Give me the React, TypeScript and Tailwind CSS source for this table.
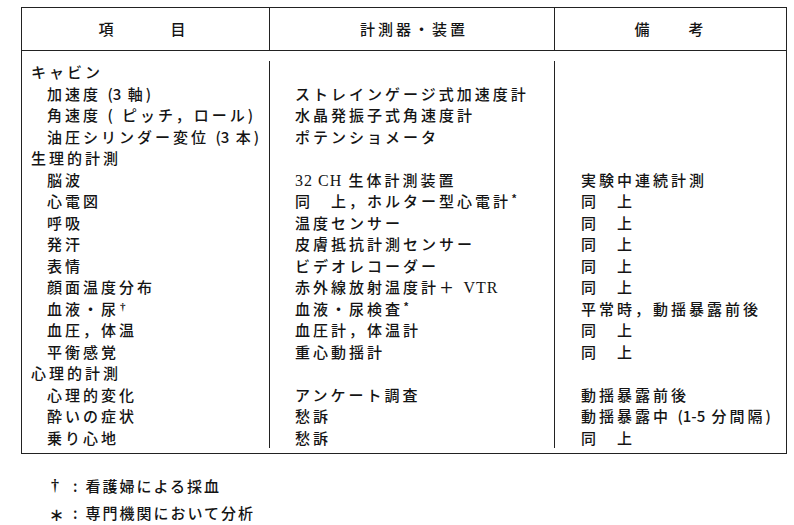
import React from "react";

type Row = { a: React.ReactNode; sub?: boolean; b?: React.ReactNode; c?: React.ReactNode };

const D = "同\u3000上";

const Star = () => (
  <span className="font-['Liberation_Sans'] font-bold text-[11px] relative -top-[5px] ml-[1px] tracking-[0]">*</span>
);
const Dag = () => (
  <span className="font-['Liberation_Serif'] font-bold text-[11px] relative -top-[5px] ml-[1px] tracking-[0]">†</span>
);
const S = ({ children }: { children: React.ReactNode }) => (
  <span className="font-['Liberation_Serif'] tracking-[1px] text-[16px]">{children}</span>
);

const rows: Row[] = [
  { a: "キャビン" },
  { a: <>加速度 <span className="tracking-[0]">(3</span> 軸)</>, sub: true, b: "ストレインゲージ式加速度計" },
  { a: "角速度 ( ピッチ，ロール)", sub: true, b: "水晶発振子式角速度計" },
  { a: <>油圧シリンダー変位 <span className="tracking-[0]">(3</span> 本)</>, sub: true, b: "ポテンショメータ" },
  { a: "生理的計測" },
  { a: "脳波", sub: true, b: <><S>32 CH</S> 生体計測装置</>, c: "実験中連続計測" },
  { a: "心電図", sub: true, b: <>{D}，ホルター型心電計<Star /></>, c: D },
  { a: "呼吸", sub: true, b: "温度センサー", c: D },
  { a: "発汗", sub: true, b: "皮膚抵抗計測センサー", c: D },
  { a: "表情", sub: true, b: "ビデオレコーダー", c: D },
  { a: "顔面温度分布", sub: true, b: <>赤外線放射温度計＋ <S>VTR</S></>, c: D },
  { a: <>血液・尿<Dag /></>, sub: true, b: <>血液・尿検査<Star /></>, c: "平常時，動揺暴露前後" },
  { a: "血圧，体温", sub: true, b: "血圧計，体温計", c: D },
  { a: "平衡感覚", sub: true, b: "重心動揺計", c: D },
  { a: "心理的計測" },
  { a: "心理的変化", sub: true, b: "アンケート調査", c: "動揺暴露前後" },
  { a: "酔いの症状", sub: true, b: "愁訴", c: <>動揺暴露中 <span className="tracking-[0]">(1-5</span> 分間隔)</> },
  { a: "乗り心地", sub: true, b: "愁訴", c: D },
];

const line = "h-[21.5px] leading-[21.5px] whitespace-nowrap";

export default function App() {
  return (
    <div className="w-[794px] h-[525px] bg-white text-[#141414] font-['Noto_Sans_CJK_JP',sans-serif] font-medium text-[15px] tracking-[3px] overflow-hidden">
      <div className="pt-[7px] pl-[21px]">
        <div className="w-[766px] border-[1.5px] border-[#222]">
          <div className="flex h-[43px] border-b-[1.5px] border-[#222] items-center">
            <div className="w-[248px] h-full border-r-[1.5px] border-[#222] flex items-center justify-center pr-[4px]">
              項<span className="inline-block w-[54px]" />目
            </div>
            <div className="w-[285px] h-full border-r-[1.5px] border-[#222] flex items-center justify-center pl-[4px]">
              計測器・装置
            </div>
            <div className="flex-1 h-full flex items-center justify-center">
              備<span className="inline-block w-[36px]" />考
            </div>
          </div>
          <div className="flex pt-[10px] pb-[5px]">
            <div className="w-[248px] border-r-[1.5px] border-[#222] pl-[9px]">
              {rows.map((r, i) => (
                <div key={i} className={`${line} ${r.sub ? "pl-[16px]" : ""}`}>{r.a}</div>
              ))}
            </div>
            <div className="w-[285px] border-r-[1.5px] border-[#222] pl-[25px]">
              {rows.map((r, i) => (
                <div key={i} className={line}>{r.b ?? ""}</div>
              ))}
            </div>
            <div className="flex-1 pl-[26px]">
              {rows.map((r, i) => (
                <div key={i} className={line}>{r.c ?? ""}</div>
              ))}
            </div>
          </div>
        </div>
      </div>
      <div className="pl-[49px] pt-[18px] text-[15px] tracking-[2px]">
        <div className="h-[27px] leading-[27px] flex items-center">
          <span className="inline-block w-[24px] font-['Liberation_Serif'] font-bold text-[16px] pl-[2px]">†</span>
          <span>:</span>
          <span className="ml-[6px]">看護婦による採血</span>
        </div>
        <div className="h-[27px] leading-[27px] flex items-center">
          <span className="inline-block w-[24px] font-['Liberation_Sans'] text-[18px] relative top-[3px]">∗</span>
          <span>:</span>
          <span className="ml-[6px]">専門機関において分析</span>
        </div>
      </div>
    </div>
  );
}
